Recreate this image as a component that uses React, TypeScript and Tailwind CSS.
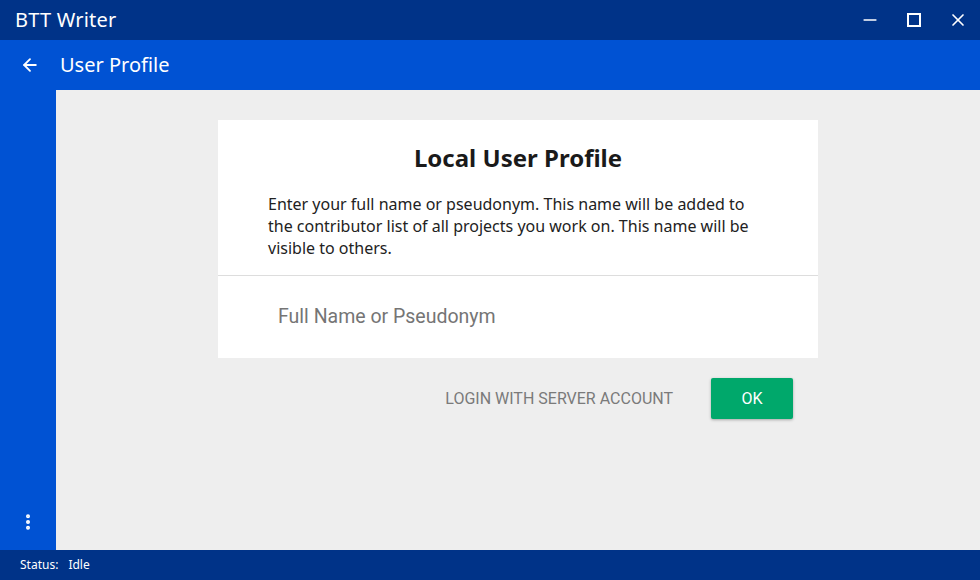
import React from 'react';
import { ArrowLeft, EllipsisVertical, Minus, X } from 'lucide-react';

const App = () => {
  return (
    <div className="w-[980px] h-[580px] flex flex-col bg-[#eeeeee] overflow-hidden" style={{ fontFamily: '"Noto Sans", "Open Sans", sans-serif' }}>
      {/* window title bar */}
      <div className="h-10 shrink-0 bg-[#003388] flex items-center text-white">
        <span className="pl-[15px] text-[20px] leading-none tracking-[0.2px]">BTT Writer</span>
        <div className="ml-auto flex items-center h-full">
          <div className="w-11 h-full flex items-center justify-center"><Minus size={20} strokeWidth={2} /></div>
          <div className="w-11 h-full flex items-center justify-center">
            <div className="w-[14px] h-[14px] border-2 border-white" />
          </div>
          <div className="w-11 h-full flex items-center justify-center"><X size={20} strokeWidth={2} /></div>
        </div>
      </div>

      {/* app bar */}
      <div className="h-[50px] shrink-0 bg-[#0052d3] flex items-center text-white">
        <div className="w-[60px] flex items-center justify-center">
          <ArrowLeft size={20} strokeWidth={2.2} />
        </div>
        <span className="text-[20px] leading-none">User Profile</span>
      </div>

      <div className="flex flex-1 min-h-0">
        {/* sidebar */}
        <div className="w-14 shrink-0 bg-[#0052d3] flex flex-col justify-end items-center pb-[18px] text-white">
          <EllipsisVertical size={20} strokeWidth={2.8} />
        </div>

        {/* content */}
        <div className="flex-1 flex flex-col items-center pt-[30px]">
          <div className="w-[600px] bg-white">
            <h1 className="text-center font-bold text-[24px] text-[#1a1a1a] pt-[23px] leading-[30px]">Local User Profile</h1>
            <p className="px-[50px] mt-[20px] text-[16px] leading-[22px] text-[#222222]">
              Enter your full name or pseudonym. This name will be added to the contributor list of all projects you work on. This name will be visible to others.
            </p>
            <div className="mt-[16px] border-t border-[#dddddd]" />
            <div className="h-[82px] flex items-center pl-[60px]">
              <input
                placeholder="Full Name or Pseudonym"
                className="w-[480px] outline-none text-[19.5px] placeholder:text-[#757575] text-[#333]"
                style={{ fontFamily: 'Roboto, sans-serif' }}
              />
            </div>
          </div>

          <div className="w-[600px] flex items-center justify-end gap-[38px] pr-[25px] mt-[20px]" style={{ fontFamily: 'Roboto, sans-serif' }}>
            <button className="text-[16px] text-[#7a7a7a] uppercase">Login with server account</button>
            <button className="w-[82px] h-[41px] bg-[#00a86b] text-white text-[16px] rounded-[2px] shadow-[0_1px_3px_rgba(0,0,0,0.3)]">OK</button>
          </div>
        </div>
      </div>

      {/* status bar */}
      <div className="h-[30px] shrink-0 bg-[#003388] flex items-center text-white text-[12px] pl-5">
        <span>Status:</span>
        <span className="ml-[10px]">Idle</span>
      </div>
    </div>
  );
};

export default App;
